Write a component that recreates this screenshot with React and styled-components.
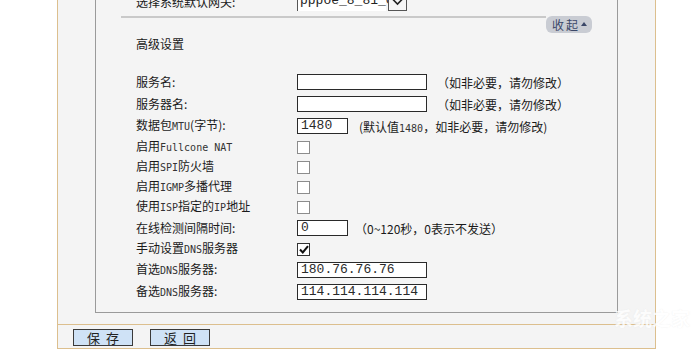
import React from "react";
import styled, { createGlobalStyle } from "styled-components";

const Global = createGlobalStyle`
  html, body { margin: 0; padding: 0; background: #ffffff; }
  body { font-family: "Noto Sans CJK SC", "Liberation Sans", sans-serif; font-size: 12px; color: #1a1a1a; overflow: hidden; }
`;

const Page = styled.div`
  width: 698px;
  height: 355px;
  overflow: hidden;
  position: relative;
`;

const Outer = styled.div`
  box-sizing: border-box;
  margin-left: 57px;
  margin-top: -8px;
  width: 599px;
  background: #f4f4f4;
  border: 1px solid #dcbf8e;
  border-top: none;
`;

const Inner = styled.div`
  box-sizing: border-box;
  margin-left: 37px;
  width: 523px;
  border: 1px solid #9a9a9a;
  border-top: none;
  padding-bottom: 9px;
`;

const TopRow = styled.div`
  display: flex;
  align-items: center;
  height: 20px;
  padding-left: 40px;
`;

const Label = styled.div`
  width: 161px;
  flex: none;
  line-height: 16px;
  white-space: nowrap;
`;

const FakeSelect = styled.div`
  display: flex;
  align-items: center;
  gap: 2px;
`;

const SelectText = styled.div`
  box-sizing: border-box;
  width: 89px;
  height: 18px;
  background: #fff;
  border-left: 1px solid #555;
  font-family: "Liberation Mono", monospace;
  font-size: 13px;
  line-height: 16px;
  padding-left: 2px;
  color: #222;
`;

const ArrowBox = styled.div`
  box-sizing: border-box;
  width: 19px;
  height: 18px;
  border: 1px solid #555;
  background: #f6f6f6;
  display: flex;
  align-items: center;
  justify-content: center;
`;

const DividerRow = styled.div`
  display: flex;
  align-items: flex-start;
  margin: 4px 25px 0 25px;
`;

const Line = styled.div`
  flex: 1;
  height: 2px;
  background: #c9c9c9;
`;

const Pill = styled.div`
  box-sizing: border-box;
  width: 46px;
  height: 17px;
  background: #c9ccd3;
  border-radius: 6px;
  color: #3b4768;
  font-size: 12px;
  line-height: 17px;
  padding-left: 6px;
  letter-spacing: 2px;
  display: flex;
  align-items: center;
  gap: 1px;
`;

const Tri = styled.span`
  display: inline-block;
  width: 0;
  height: 0;
  border-left: 3.5px solid transparent;
  border-right: 3.5px solid transparent;
  border-bottom: 4px solid #3b4768;
  margin-top: -1px;
`;

const Title = styled.div`
  padding-left: 40px;
  margin-top: 1px;
  height: 20px;
  line-height: 20px;
  font-size: 12px;
`;

const Rows = styled.div`
  margin-top: 17px;
  padding-left: 40px;
  display: flex;
  flex-direction: column;
`;

const Row = styled.div`
  display: flex;
  align-items: center;
  height: ${(p) => p.$h}px;
`;

const Small = styled.span`
  font-family: "DejaVu Sans Mono", "Liberation Mono", monospace;
  font-size: 10px;
  color: #333;
`;

const Input = styled.div`
  box-sizing: border-box;
  width: ${(p) => p.$w}px;
  height: 16px;
  flex: none;
  background: #fff;
  border: 1px solid #2a2a2a;
  font-family: "Liberation Mono", monospace;
  font-size: 13px;
  line-height: 14px;
  padding-left: 3px;
  color: #2a2a2a;
  white-space: nowrap;
  overflow: hidden;
`;

const Hint = styled.div`
  margin-left: ${(p) => p.$ml}px;
  white-space: nowrap;
  color: #1a1a1a;
`;

const Check = styled.div`
  box-sizing: border-box;
  width: 13px;
  height: 13px;
  flex: none;
  background: #fff;
  border: 1px solid ${(p) => (p.$on ? "#333" : "#8c8c8c")};
  display: flex;
  align-items: center;
  justify-content: center;
`;

const Separator = styled.div`
  margin-top: 11px;
  height: 1px;
  background: #dcbf8e;
`;

const ButtonRow = styled.div`
  display: flex;
  gap: 17px;
  padding: 4px 0 2px 15px;
`;

const Button = styled.div`
  box-sizing: border-box;
  width: 60px;
  height: 17px;
  background: #cfe2f6;
  border: 1px solid #3a3a3a;
  font-size: 13px;
  line-height: 15px;
  text-align: center;
  letter-spacing: 6px;
  padding-left: 6px;
  color: #222;
`;

const Watermark = styled.div`
  position: absolute;
  right: 8px;
  bottom: 24px;
  font-size: 19px;
  font-weight: 700;
  color: #ffffff;
  opacity: 0.8;
  pointer-events: none;
  text-shadow: 0 0 1px rgba(200, 200, 200, 0.35);
`;

function Checkbox({ on }) {
  return (
    <Check $on={on}>
      {on && (
        <svg width="10" height="9" viewBox="0 0 10 9">
          <path d="M1 4.5 L3.8 7.5 L9 1.2" fill="none" stroke="#111" strokeWidth="2" />
        </svg>
      )}
    </Check>
  );
}

export default function App() {
  return (
    <Page>
      <Global />
      <Outer>
        <Inner>
          <TopRow>
            <Label>选择系统默认网关:</Label>
            <FakeSelect>
              <SelectText>pppoe_8_81_0</SelectText>
              <ArrowBox>
                <svg width="11" height="8" viewBox="0 0 11 8">
                  <path d="M1 1.5 L5.5 6 L10 1.5" fill="none" stroke="#222" strokeWidth="1.6" />
                </svg>
              </ArrowBox>
            </FakeSelect>
          </TopRow>
          <DividerRow>
            <Line />
            <Pill>
              收起<Tri />
            </Pill>
          </DividerRow>
          <Title>高级设置</Title>
          <Rows>
            <Row $h={22}>
              <Label>服务名:</Label>
              <Input $w={130} />
              <Hint $ml={10}>（如非必要，请勿修改）</Hint>
            </Row>
            <Row $h={22}>
              <Label>服务器名:</Label>
              <Input $w={130} />
              <Hint $ml={10}>（如非必要，请勿修改）</Hint>
            </Row>
            <Row $h={22}>
              <Label>
                数据包<Small>MTU</Small>(字节):
              </Label>
              <Input $w={51}>1480</Input>
              <Hint $ml={11}>
                (默认值<Small>1480</Small>，如非必要，请勿修改)
              </Hint>
            </Row>
            <Row $h={20}>
              <Label>
                启用<Small>Fullcone NAT</Small>
              </Label>
              <Checkbox />
            </Row>
            <Row $h={20}>
              <Label>
                启用<Small>SPI</Small>防火墙
              </Label>
              <Checkbox />
            </Row>
            <Row $h={20}>
              <Label>
                启用<Small>IGMP</Small>多播代理
              </Label>
              <Checkbox />
            </Row>
            <Row $h={20}>
              <Label>
                使用<Small>ISP</Small>指定的<Small>IP</Small>地址
              </Label>
              <Checkbox />
            </Row>
            <Row $h={22}>
              <Label>在线检测间隔时间:</Label>
              <Input $w={51}>0</Input>
              <Hint $ml={7}>（0~120秒，0表示不发送）</Hint>
            </Row>
            <Row $h={20}>
              <Label>
                手动设置<Small>DNS</Small>服务器
              </Label>
              <Checkbox on />
            </Row>
            <Row $h={22}>
              <Label>
                首选<Small>DNS</Small>服务器:
              </Label>
              <Input $w={130}>180.76.76.76</Input>
            </Row>
            <Row $h={22}>
              <Label>
                备选<Small>DNS</Small>服务器:
              </Label>
              <Input $w={130}>114.114.114.114</Input>
            </Row>
          </Rows>
        </Inner>
        <Separator />
        <ButtonRow>
          <Button>保存</Button>
          <Button>返回</Button>
        </ButtonRow>
      </Outer>
      <Watermark>系统之家</Watermark>
    </Page>
  );
}
